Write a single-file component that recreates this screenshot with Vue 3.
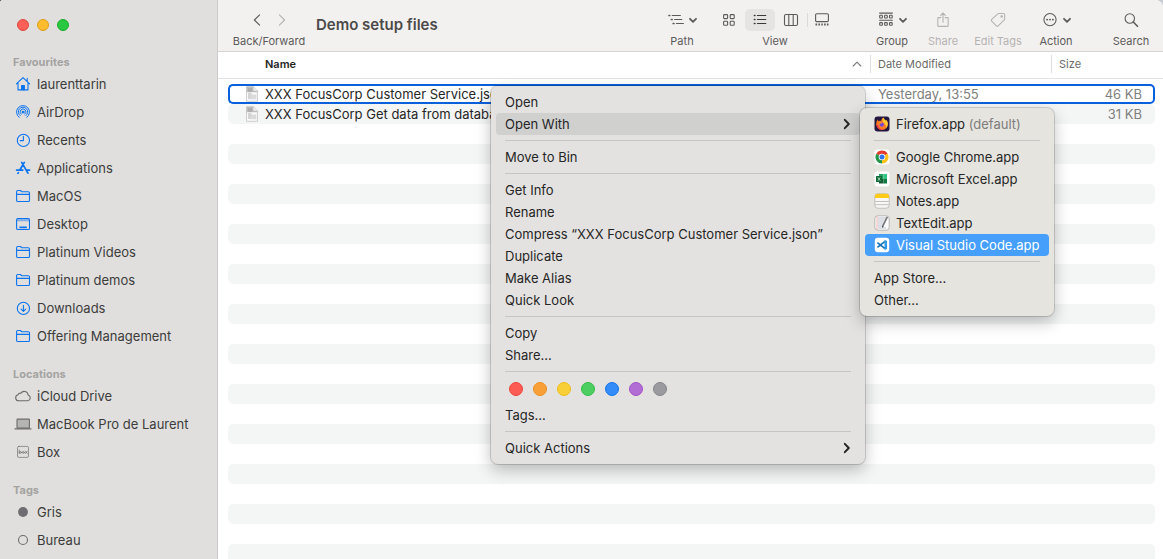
<script setup>
const favourites = [
  { name: 'laurenttarin', icon: 'home' },
  { name: 'AirDrop', icon: 'airdrop' },
  { name: 'Recents', icon: 'clock' },
  { name: 'Applications', icon: 'apps' },
  { name: 'MacOS', icon: 'folder' },
  { name: 'Desktop', icon: 'desktop' },
  { name: 'Platinum Videos', icon: 'folder' },
  { name: 'Platinum demos', icon: 'folder' },
  { name: 'Downloads', icon: 'download' },
  { name: 'Offering Management', icon: 'folder' },
]
const locations = [
  { name: 'iCloud Drive', icon: 'cloud' },
  { name: 'MacBook Pro de Laurent', icon: 'laptop' },
  { name: 'Box', icon: 'box' },
]
const tags = [
  { name: 'Gris', icon: 'dot' },
  { name: 'Bureau', icon: 'ring' },
]
const sections = [
  { title: 'Favourites', items: favourites, accent: true },
  { title: 'Locations', items: locations },
  { title: 'Tags', items: tags },
]

const files = [
  { name: 'XXX FocusCorp Customer Service.json', date: 'Yesterday, 13:55', size: '46 KB', selected: true },
  { name: 'XXX FocusCorp Get data from databa', date: '', size: '31 KB' },
]

const menu = [
  'Open', 'Open With', null, 'Move to Bin', null,
  'Get Info', 'Rename', 'Compress “XXX FocusCorp Customer Service.json”', 'Duplicate', 'Make Alias', 'Quick Look', null,
  'Copy', 'Share...', null, 'colours', 'Tags...', null, 'Quick Actions',
]
const colours = ['red', 'orange', 'yellow', 'green', 'blue', 'purple', 'grey']
const apps = [
  { name: 'Firefox.app', icon: 'firefox', note: '(default)' },
  null,
  { name: 'Google Chrome.app', icon: 'chrome' },
  { name: 'Microsoft Excel.app', icon: 'excel' },
  { name: 'Notes.app', icon: 'notes' },
  { name: 'TextEdit.app', icon: 'textedit' },
  { name: 'Visual Studio Code.app', icon: 'code', active: true },
  null,
  { name: 'App Store...' },
  { name: 'Other...' },
]
</script>

<template>
  <div class="window">
    <aside class="sidebar">
      <div class="lights">
        <button class="light close" aria-label="Close"></button>
        <button class="light minimise" aria-label="Minimise"></button>
        <button class="light zoom" aria-label="Zoom"></button>
      </div>
      <nav v-for="s in sections" :key="s.title" :aria-label="s.title">
        <h2>{{ s.title }}</h2>
        <a v-for="i in s.items" :key="i.name" href="#" class="place">
          <svg class="place-icon" :class="{ accent: s.accent }" width="18" height="16" viewBox="0 0 18 16" fill="none" stroke="currentColor" stroke-width="1.1" stroke-linecap="round" stroke-linejoin="round" aria-hidden="true">
            <g v-if="i.icon === 'home'">
              <path d="M2.4 7.8 9 1.6l6.6 6.2M4 6.6v7.3h10V6.6M13.2 5.2V2.4" />
              <path d="M7.6 13.8V9.6h2.8v4.2z" fill="currentColor" />
            </g>
            <g v-else-if="i.icon === 'airdrop'" stroke-width="1">
              <path d="M5.2 13.4A6.5 6.5 0 1 1 12.8 13.4M6.2 11.7A4.7 4.7 0 1 1 11.8 11.7M7.2 10.2A2.9 2.9 0 1 1 10.8 10.2" />
              <circle cx="9" cy="8.1" r="1" fill="currentColor" />
            </g>
            <g v-else-if="i.icon === 'clock'">
              <circle cx="9.4" cy="8.4" r="6.1" /><path d="M9.4 4.4v4.2H6.2" />
            </g>
            <g v-else-if="i.icon === 'apps'" stroke-width="1.7">
              <path d="M7.7 2.4 13.9 13.2M10.3 2.4 6 9.8M4.4 12.6l-.5.8M2.6 10.1h6.2M12.6 10.1h2.9" />
            </g>
            <g v-else-if="i.icon === 'folder'">
              <path d="M2.6 12.6V3.8q0-1.3 1.3-1.3h2.6l1.4 1.3h6.3q1.3 0 1.3 1.3v7.1q0 1.3-1.3 1.3H3.9q-1.3 0-1.3-1.1zM2.6 6.4h12.9" />
            </g>
            <g v-else-if="i.icon === 'desktop'">
              <rect x="2.6" y="2.6" width="12.9" height="10.9" rx="1.3" />
              <path d="M3.2 4.4h11.6" stroke-width="1.8" opacity=".45" /><path d="M5.4 11.3h7.4" stroke-width="1.8" stroke-linecap="butt" />
            </g>
            <g v-else-if="i.icon === 'download'">
              <circle cx="9.4" cy="8.4" r="6.1" /><path d="M9.4 5.2v6M7.1 9.2l2.3 2.2 2.3-2.2" />
            </g>
            <path v-else-if="i.icon === 'cloud'" d="M4.8 12.8a3.1 3.1 0 0 1-.8-6.1 2.6 2.6 0 0 1 2.9-1.5 3.9 3.9 0 0 1 7.2 1.8 3 3 0 0 1-.2 5.8z" />
            <g v-else-if="i.icon === 'laptop'">
              <rect x="3" y="3.1" width="12.4" height="9" rx=".6" fill="#b4b4b2" /><path d="M1 12.8h16" stroke-width="1.3" />
            </g>
            <g v-else-if="i.icon === 'box'" stroke-width=".9">
              <rect x="3.5" y="2.4" width="11" height="11" rx="1.3" opacity=".75" />
              <path d="M5.2 6v3.4M11.4 7.2l1.8 2.3m0-2.3-1.8 2.3" stroke-width=".7" /><circle cx="6.4" cy="8.4" r="1" stroke-width=".7" /><circle cx="9.3" cy="8.4" r="1" stroke-width=".7" />
            </g>
            <circle v-else-if="i.icon === 'dot'" cx="9" cy="8" r="4.9" fill="#6e6d72" stroke="none" />
            <circle v-else cx="9" cy="8" r="4.5" />
          </svg>
          <span>{{ i.name }}</span>
        </a>
      </nav>
    </aside>

    <main class="content">
      <header class="toolbar">
        <div class="tool history" role="group" aria-labelledby="history-label">
          <div class="icons">
            <button aria-label="Back"><svg width="14" height="16" viewBox="0 0 14 16" class="line"><path d="M9.6 2.8 4.4 8l5.2 5.2" /></svg></button>
            <button aria-label="Forward" class="dim"><svg width="14" height="16" viewBox="0 0 14 16" class="line"><path d="M4.4 2.8 9.6 8l-5.2 5.2" /></svg></button>
          </div>
          <span id="history-label">Back/Forward</span>
        </div>
        <h1>Demo setup files</h1>
        <button class="tool path">
          <span class="icons">
            <svg width="18" height="16" viewBox="0 0 18 16" class="line"><path d="M5.2 3.5h8.2M7.6 7.5h7.2M9.4 11.5h7" /><path d="M2 3.5h.7M4.4 7.5h.7M6.2 11.5h.7" stroke-width="1.7" /></svg>
            <svg width="10" height="16" viewBox="0 0 10 16" class="line chevron"><path d="m2 6.8 3 3 3-3" /></svg>
          </span>
          <span>Path</span>
        </button>
        <div class="tool view" role="group" aria-labelledby="view-label">
          <div class="icons">
            <button aria-label="Icons"><svg width="16" height="16" viewBox="0 0 16 16" class="line"><rect x="2.6" y="2.6" width="4" height="4" rx=".8" /><rect x="9.2" y="2.6" width="4" height="4" rx=".8" /><rect x="2.6" y="9.2" width="4" height="4" rx=".8" /><rect x="9.2" y="9.2" width="4" height="4" rx=".8" /></svg></button>
            <button aria-label="List" aria-pressed="true" class="pressed"><svg width="16" height="16" viewBox="0 0 16 16" class="line"><path d="M5.4 3.5h8.4M5.4 7.5h8.4M5.4 11.5h8.4" /><path d="M2.4 3.5h.5M2.4 7.5h.5M2.4 11.5h.5" stroke-width="1.6" /></svg></button>
            <button aria-label="Columns"><svg width="16" height="16" viewBox="0 0 16 16" class="line"><rect x="1.5" y="2.5" width="13" height="11" rx="1.4" /><path d="M5.8 2.5v11M10.2 2.5v11" /></svg></button>
            <button aria-label="Gallery" class="divided"><svg width="16" height="16" viewBox="0 0 16 16" class="line"><rect x="1.6" y="1.8" width="12.8" height="7.8" rx="1.2" /><path d="M1.5 12.5h1.6M4.4 12.5H6M7.3 12.5h1.5M10.1 12.5h1.6M12.9 12.5h1.6" stroke-width="1.8" stroke-linecap="butt" /></svg></button>
          </div>
          <span id="view-label">View</span>
        </div>
        <button class="tool group">
          <span class="icons">
            <svg width="18" height="16" viewBox="0 0 18 16" class="line"><path d="M2.6 1.1h12.8M2.6 8.2h12.8" /><g><rect x="2.7" y="3.3" width="2.7" height="2.7" rx=".6" /><rect x="7.6" y="3.3" width="2.7" height="2.7" rx=".6" /><rect x="12.5" y="3.3" width="2.7" height="2.7" rx=".6" /><rect x="2.7" y="10.6" width="2.7" height="2.7" rx=".6" /><rect x="7.6" y="10.6" width="2.7" height="2.7" rx=".6" /><rect x="12.5" y="10.6" width="2.7" height="2.7" rx=".6" /></g></svg>
            <svg width="10" height="16" viewBox="0 0 10 16" class="line chevron"><path d="m2 6.8 3 3 3-3" /></svg>
          </span>
          <span>Group</span>
        </button>
        <button class="tool share dim" disabled>
          <span class="icons"><svg width="16" height="16" viewBox="0 0 16 16" class="line"><path d="M5.8 5.6H3.6q-.8 0-.8.8v7.2q0 .8.8.8h8.8q.8 0 .8-.8V6.4q0-.8-.8-.8h-2.2M8 10.2V1.2M5.6 3.4 8 1l2.4 2.4" /></svg></span>
          <span>Share</span>
        </button>
        <button class="tool edit-tags dim" disabled>
          <span class="icons"><svg width="16" height="16" viewBox="0 0 16 16" class="line"><path d="M8.8 1.5h4.6q1.3 0 1.3 1.3v4.1q0 .5-.4.9l-6.1 6.1q-.9.9-1.8 0L1.7 9.2q-.9-.9 0-1.8l6.1-5.5q.4-.4 1-.4z" /><circle cx="11.7" cy="4.5" r=".8" /></svg></span>
          <span>Edit Tags</span>
        </button>
        <button class="tool action">
          <span class="icons">
            <svg width="18" height="16" viewBox="0 0 18 16" class="line"><circle cx="9" cy="7.6" r="6.1" /><path d="M6 7.6h.2M8.9 7.6h.2M11.8 7.6h.2" stroke-width="1.7" /></svg>
            <svg width="10" height="16" viewBox="0 0 10 16" class="line chevron"><path d="m2 6.8 3 3 3-3" /></svg>
          </span>
          <span>Action</span>
        </button>
        <button class="tool search">
          <span class="icons"><svg width="16" height="16" viewBox="0 0 16 16" class="line"><circle cx="6.8" cy="6.5" r="4.7" /><path d="m10.3 10 4.2 4.2" stroke-width="1.6" /></svg></span>
          <span>Search</span>
        </button>
      </header>

      <div class="list">
        <table>
          <thead>
            <tr>
              <th class="name">
                <span class="head"><span>Name</span><svg width="10" height="10" viewBox="0 0 10 10" class="line"><path d="m1.2 7 3.8-3.8L8.8 7" /></svg></span>
              </th>
              <th class="date"><span class="head ruled">Date Modified</span></th>
              <th class="size"><span class="head ruled">Size</span></th>
            </tr>
          </thead>
          <tbody>
            <tr v-for="f in files" :key="f.name" :class="{ selected: f.selected }">
              <td class="name">
                <span class="file">
                  <svg width="14" height="16" viewBox="0 0 14 16" aria-hidden="true"><path d="M1.5.7h7.2l3.8 3.8v10.8h-11z" fill="#fafafa" stroke="#c4c4c4" stroke-width=".8" /><path d="M1.6.8h7.1v3.7h3.7v1.8H1.6z" fill="#bdbdbd" /><path d="M8.7.8v3.7h3.7z" fill="#ececec" /><path d="M3 3h4M3 5h4M3 8h3.5M3 10h5M3 12h4" stroke="#999" stroke-width=".8" /><path d="M6.6 8.4h4.8v4.8H5z" fill="#dadada" /></svg>
                  {{ f.name }}
                </span>
              </td>
              <td class="date">{{ f.date }}</td>
              <td class="size">{{ f.size }}</td>
            </tr>
            <tr v-for="n in 40" :key="n" aria-hidden="true"><td></td><td></td><td></td></tr>
          </tbody>
        </table>
      </div>
    </main>

    <ul class="menu context" role="menu">
      <template v-for="(m, k) in menu" :key="k">
        <li v-if="m === null" class="separator" role="separator"></li>
        <li v-else-if="m === 'colours'" class="swatches" role="group" aria-label="Tag colours">
          <button v-for="c in colours" :key="c" class="swatch" :class="c" :aria-label="c"></button>
        </li>
        <li v-else class="entry" role="none">
          <button role="menuitem" :class="{ open: m === 'Open With' }">
            <span>{{ m }}</span>
            <svg v-if="m === 'Open With' || m === 'Quick Actions'" class="arrow" width="8" height="12" viewBox="0 0 8 12"><path d="m1.8 1.8 4 4.2-4 4.2" /></svg>
          </button>
          <ul v-if="m === 'Open With'" class="menu submenu" role="menu">
            <template v-for="(a, j) in apps" :key="j">
              <li v-if="a === null" class="separator" role="separator"></li>
              <li v-else role="none">
                <button role="menuitem" :class="{ active: a.active }">
                  <svg v-if="a.icon" width="16" height="16" viewBox="0 0 16 16" aria-hidden="true">
                    <g v-if="a.icon === 'firefox'">
                      <rect x=".5" y=".5" width="15" height="15" rx="3" fill="#23173f" />
                      <path d="M8 14a5.8 5.8 0 0 1-5.8-6c0-2 .8-3.5 1.7-4.4 0 .8.3 1.3.7 1.7.9-.6 1.8-.6 2.6-.4C7.4 3.3 8.3 2 9.5 1.5c.2 1.800 1.500 2 2.400 3.200l.3-.7c1 .9 1.600 2.300 1.600 4A5.800 5.800 0 0 1 8 14z" fill="#ff7a24" />
                      <path d="M9.5 1.5c.2 1.800 1.500 2 2.400 3.200l.3-.7c1 .9 1.600 2.300 1.600 4 0 1.500-.7 3-1.800 4 .3-3-1-4.500-2.600-5.200C8.200 5 8.300 2.500 9.500 1.500z" fill="#ffc933" />
                      <path d="M2.300 8.500A5.800 5.800 0 0 0 10 13.500c-3 .1-5.500-1-6-4.300z" fill="#f0304d" />
                      <circle cx="7.800" cy="8.600" r="2.100" fill="#7747d6" /><path d="M4.800 6.500c1.200-.7 2.500-.3 3.500.4-1 .2-1.500.8-2.600.9z" fill="#ff9a2e" />
                    </g>
                    <g v-else-if="a.icon === 'chrome'">
                      <rect x=".5" y=".5" width="15" height="15" rx="3" fill="#fff" />
                      <path d="M8 8 2.370 4.750A6.500 6.500 0 0 1 13.630 4.750z" fill="#e33b2e" />
                      <path d="M8 8V14.500A6.500 6.500 0 0 1 2.370 4.750z" fill="#23964a" />
                      <path d="M8 8l5.630-3.250A6.500 6.500 0 0 1 8 14.500z" fill="#fbc116" />
                      <circle cx="8" cy="8" r="3.300" fill="#fff" /><circle cx="8" cy="8" r="2.500" fill="#2f74e8" />
                    </g>
                    <g v-else-if="a.icon === 'excel'">
                      <rect x=".5" y=".5" width="15" height="15" rx="3" fill="#fff" />
                      <path d="M5 3h4.500v5H5z" fill="#21a366" /><path d="M9.500 3H13v5H9.500z" fill="#33c481" /><path d="M5 8h4.500v4.500H5z" fill="#185c37" /><path d="M9.500 8H13v4.500H9.500z" fill="#107c41" />
                      <rect x="2" y="5" width="6" height="6" rx=".6" fill="#0d6a37" /><path d="m3.800 6.300 2.400 3.400m0-3.400L3.800 9.700" stroke="#c9e6d5" stroke-width=".8" />
                    </g>
                    <g v-else-if="a.icon === 'notes'">
                      <rect x=".8" y=".8" width="14.400" height="14.400" rx="3" fill="#f8f7f4" stroke="#b5b3ae" stroke-width=".8" />
                      <path d="M.8 5V3.800a3 3 0 0 1 3-3h8.400a3 3 0 0 1 3 3V5z" fill="#fbcb17" /><path d="M1.200 8.500h13.600M1.200 11.700h13.600" stroke="#b9b9bd" stroke-width=".9" />
                    </g>
                    <g v-else-if="a.icon === 'textedit'">
                      <rect x=".8" y=".8" width="14.400" height="14.400" rx="3" fill="#fcfcfc" stroke="#aaa" stroke-width=".8" />
                      <path d="M4 3h8M4 5h6.500M4 7h5.500M4 9h4.500M4 11h3.500M4 13h8" stroke="#a9b4c2" stroke-width=".8" /><path d="M3 1.200v13.600" stroke="#eba3a0" stroke-width=".8" />
                      <path d="m13.300 1.800-5 10" stroke="#777" stroke-width="1.700" /><path d="m8.600 11-.7 2.200 1.600-1.700z" fill="#333" />
                    </g>
                    <g v-else>
                      <rect x=".8" y=".8" width="14.400" height="14.400" rx="3" fill="#fff" />
                      <path d="M10.500 2.800 13 3.900v8.200l-2.500 1.100z" fill="#2f9de8" /><path d="M10.700 4.600 3.400 10.300M3.400 5.700l7.300 5.700" stroke="#1474b8" stroke-width="1.700" />
                    </g>
                  </svg>
                  <span>{{ a.name }} <small v-if="a.note">{{ a.note }}</small></span>
                </button>
              </li>
            </template>
          </ul>
        </li>
      </template>
    </ul>
  </div>
</template>

<style>
body {
  margin: 0;
  background: linear-gradient(90deg, #4a4856, #c9ced4);
}
</style>

<style scoped>
.window {
  position: relative;
  display: flex;
  height: 100vh;
  overflow: hidden;
  border-radius: 3px 8px 0 0;
  background: #fff;
  color: #262626;
  font: 13px/20px Inter, "Liberation Sans", sans-serif;
}
button {
  padding: 0;
  border: 0;
  background: none;
  color: inherit;
  font: inherit;
}
svg {
  display: block;
  flex: none;
}
.line {
  fill: none;
  stroke: currentColor;
  stroke-width: 1.1;
  stroke-linecap: round;
  stroke-linejoin: round;
}

.sidebar {
  flex: none;
  box-sizing: border-box;
  width: 218px;
  border-right: 1px solid #cdccca;
  background: #e0dfdd;
}
.lights {
  display: flex;
  gap: 8px;
  padding: 19px 17px 7px;
}
.light {
  box-sizing: border-box;
  width: 12px;
  height: 12px;
  border: 1px solid #e1483f;
  border-radius: 50%;
  background: #fe5f57;
}
.minimise { background: #febc2e; border-color: #df9e1b; }
.zoom { background: #28c840; border-color: #1cab2b; }
h2 {
  margin: 0;
  padding: 16px 13px 0;
  color: #a4a3a2;
  font-size: 11px;
  font-weight: 700;
  line-height: 16px;
}
.place {
  display: flex;
  align-items: center;
  gap: 5px;
  height: 28px;
  padding-left: 14px;
  color: #3c3c3b;
  text-decoration: none;
  white-space: nowrap;
}
.place-icon { color: #6c6c6c; }
.accent { color: #0a73f0; }

.content {
  display: flex;
  flex: 1;
  flex-direction: column;
  min-width: 0;
}
.toolbar {
  display: flex;
  flex: none;
  box-sizing: border-box;
  height: 52px;
  padding: 8px 8px 0 15px;
  border-bottom: 1px solid #d6d4d2;
  background: #f3f1f0;
  color: #5c5b5a;
}
.tool {
  display: flex;
  flex: none;
  flex-direction: column;
  align-items: center;
  margin-right: 8px;
  font-size: 11px;
  line-height: 16px;
  white-space: nowrap;
}
.icons {
  display: flex;
  align-items: center;
  justify-content: center;
  height: 24px;
  padding-bottom: 1px;
}
.chevron {
  margin-left: 3px;
  stroke-width: 1.8;
}
.tool.dim, .dim { color: #b5b3b2; }
.history { width: 72px; margin-right: 11px; }
.history .icons { gap: 11px; }
h1 {
  flex: 1;
  margin: 0;
  overflow: hidden;
  color: #4b4a49;
  font-size: 15px;
  font-weight: 600;
  line-height: 34px;
  white-space: nowrap;
}
.path, .group { width: 46px; }
.group { margin-right: 9px; }
.view { width: 124px; margin-right: 32px; }
.view .icons { gap: 1px; }
.view .icons button {
  display: grid;
  place-items: center;
  width: 30px;
  height: 22px;
}
.view .icons .pressed {
  border-radius: 5px;
  background: #e5e4e2;
  color: #3a3a39;
}
.view .icons .divided {
  background: linear-gradient(#dcdad9, #dcdad9) 0 4px / 1px 14px no-repeat;
}
.share { width: 38px; }
.edit-tags { width: 56px; }
.action { width: 44px; margin-right: 29px; }
.search { width: 48px; margin-right: 0; }

.list {
  flex: 1;
  min-height: 0;
  overflow: hidden;
  padding: 0 8px 0 10px;
  background: linear-gradient(#e2e2e2, #e2e2e2) 0 26px / 100% 1px no-repeat;
}
table {
  width: 100%;
  border-spacing: 0;
  table-layout: fixed;
}
th {
  height: 24px;
  padding: 0 0 8px;
  color: #6a6a6a;
  font-size: 11px;
  font-weight: 400;
  line-height: 18px;
  text-align: left;
}
th.name {
  padding-left: 37px;
  color: #262626;
  font-weight: 600;
}
th.date { width: 181px; }
th.size { width: 104px; }
.head {
  display: flex;
  align-items: center;
  justify-content: space-between;
  padding-right: 8px;
}
.head .line { color: #7a7a7a; }
.ruled {
  padding-left: 7px;
  border-left: 1px solid #dedede;
}
td {
  box-sizing: border-box;
  height: 20px;
  padding: 0;
  line-height: 16px;
  white-space: nowrap;
}
tbody tr:nth-child(even) td { background: #f4f5f5; }
td:first-child { border-radius: 5px 0 0 5px; }
td:last-child { border-radius: 0 5px 5px 0; }
td.name { padding-left: 17px; }
td.date { padding-left: 8px; color: #808080; }
td.size { padding-right: 13px; color: #808080; text-align: right; }
.selected td {
  border: solid #0860dc;
  border-width: 2px 0;
}
.selected td:first-child { border-left-width: 2px; padding-left: 15px; }
.selected td:last-child { border-right-width: 2px; padding-right: 11px; }
.file {
  display: flex;
  align-items: center;
  gap: 6px;
  overflow: hidden;
}

.menu {
  position: absolute;
  box-sizing: border-box;
  margin: 0;
  padding: 5px;
  border-radius: 7px;
  background: #e4e2e0;
  box-shadow: 0 0 0 1px #00000026, 0 6px 16px #00000040;
  list-style: none;
}
.context {
  top: 86px;
  left: 491px;
  width: 374px;
}
.submenu {
  top: -5px;
  left: 100%;
  width: 194px;
  background: #e5e4df;
}
.entry { position: relative; }
.menu [role="menuitem"] {
  display: flex;
  align-items: center;
  gap: 6px;
  width: 100%;
  height: 22px;
  padding: 0 9px;
  border-radius: 4px;
  text-align: left;
  white-space: nowrap;
}
.menu .open { background: #d0d0cf; }
.menu .active {
  background: #469ffb;
  color: #fff;
}
.arrow {
  margin-left: auto;
  fill: none;
  stroke: #222;
  stroke-width: 1.9;
  stroke-linecap: round;
  stroke-linejoin: round;
}
small {
  color: #7e7d7b;
  font-size: 13px;
}
.separator {
  height: 1px;
  margin: 5px 9px;
  background: #c7c5c4;
}
.swatches {
  display: flex;
  gap: 10px;
  padding: 5px 13px 8px;
}
.swatch {
  box-sizing: border-box;
  width: 14px;
  height: 14px;
  border: 1px solid;
  border-radius: 50%;
}
.swatch.red { background: #fb5b52; border-color: #f0443b; }
.swatch.orange { background: #f8a037; border-color: #ee8e1d; }
.swatch.yellow { background: #f8cf36; border-color: #edbd18; }
.swatch.green { background: #4dce61; border-color: #31bd46; }
.swatch.blue { background: #338cf7; border-color: #1775ee; }
.swatch.purple { background: #b26dd5; border-color: #a052c8; }
.swatch.grey { background: #9b9a9f; border-color: #858489; }
</style>
